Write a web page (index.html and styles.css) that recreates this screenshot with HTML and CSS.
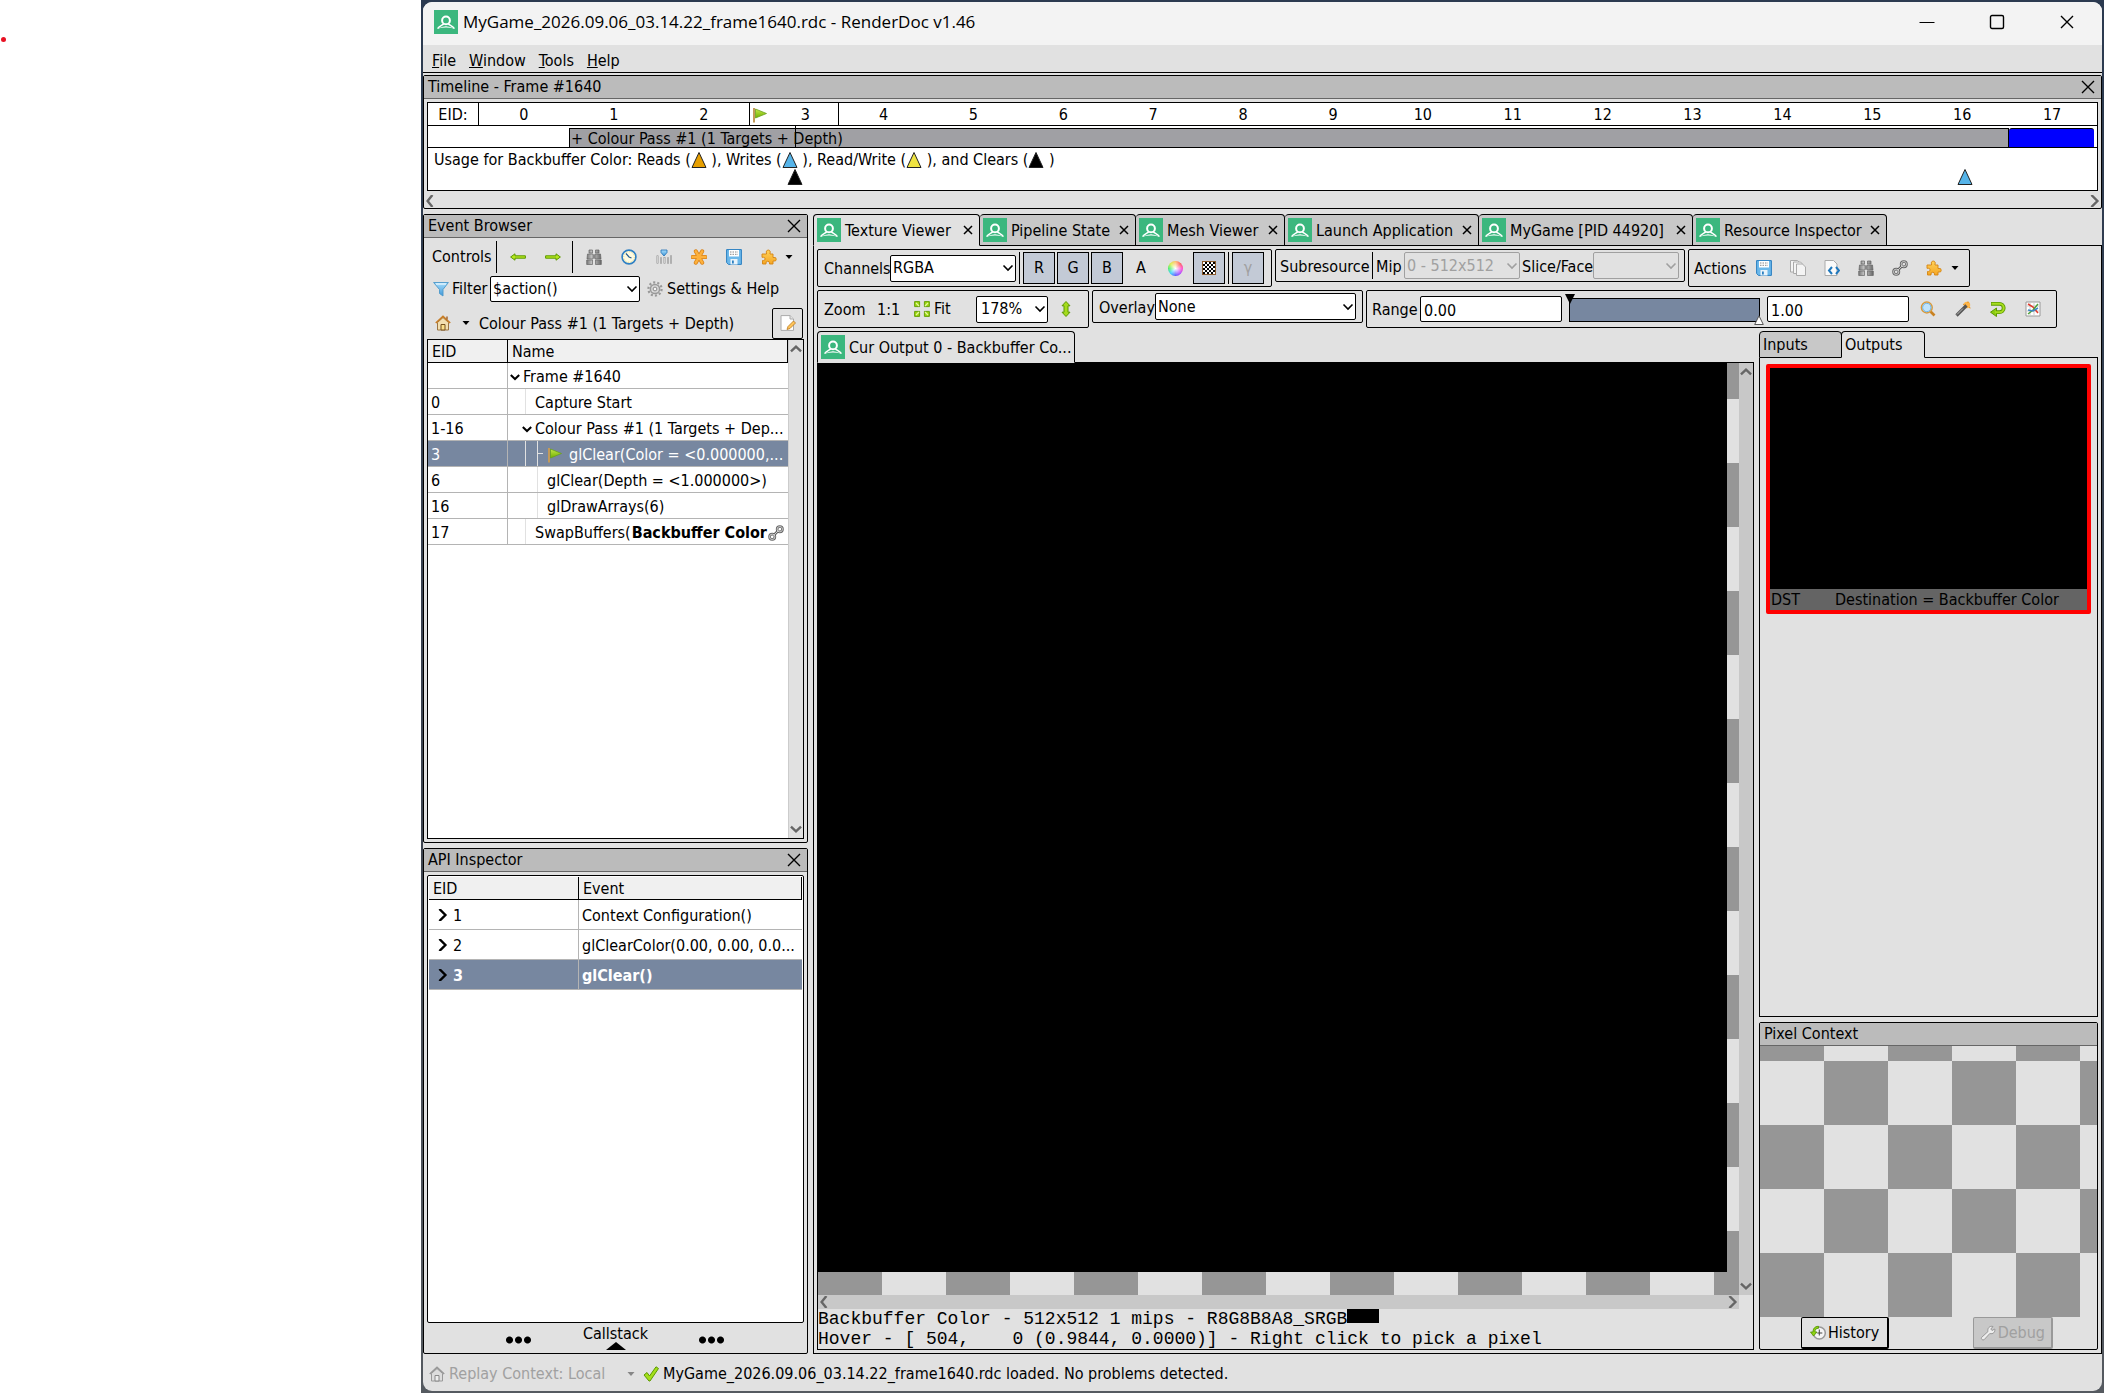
FILE: index.html
```html
<!DOCTYPE html>
<html lang="en">
<head>
<meta charset="utf-8">
<title>MyGame_2026.09.06_03.14.22_frame1640.rdc - RenderDoc v1.46</title>
<link rel="stylesheet" href="styles.css">
</head>
<body>
<svg class="sprite" aria-hidden="true">
  <defs>
    <linearGradient id="g-green" x1="0" y1="0" x2="0" y2="1"><stop offset="0" stop-color="#c5e84a"/><stop offset="1" stop-color="#6fb000"/></linearGradient>
    <linearGradient id="g-blue" x1="0" y1="0" x2="0" y2="1"><stop offset="0" stop-color="#a8defc"/><stop offset="1" stop-color="#3f97d8"/></linearGradient>
    <linearGradient id="g-orange" x1="0" y1="0" x2="0" y2="1"><stop offset="0" stop-color="#ffd35c"/><stop offset="1" stop-color="#f5a623"/></linearGradient>
    <linearGradient id="g-gray" x1="0" y1="0" x2="1" y2="0"><stop offset="0" stop-color="#777"/><stop offset=".4" stop-color="#ccc"/><stop offset="1" stop-color="#666"/></linearGradient>
  </defs>
  <symbol id="logo" viewBox="0 0 24 24"><rect width="24" height="24" fill="#3bb77e"/><circle cx="12" cy="10.4" r="3.9" fill="none" stroke="#fff" stroke-width="2"/><path d="M3.6 18.6C5.500 15.600 8.500 15.500 10 13.600M20.400 18.600C18.500 15.600 15.500 15.500 14 13.600" fill="none" stroke="#fff" stroke-width="1.600"/><path d="M3.600 18.700Q12 13.600 20.400 18.700Q12 16.200 3.600 18.700Z" fill="#fff"/></symbol>
  <symbol id="flag" viewBox="0 0 16 16"><path d="M2 1v14.500" stroke="#c39a5a" stroke-width="2"/><path d="M3.500 2L14.500 6.500L3.500 11Z" fill="url(#g-green)" stroke="#6a9f1c" stroke-width=".8"/></symbol>
  <symbol id="left" viewBox="0 0 16 16"><path d="M.6 8L5 4.800V6.800H15.400V9.200H5V11.200Z" fill="#b5e61d" stroke="#5c9900" stroke-width="1"/></symbol>
  <symbol id="right" viewBox="0 0 16 16"><path d="M15.400 8L11 4.800V6.800H.6V9.200H11V11.200Z" fill="#b5e61d" stroke="#5c9900" stroke-width="1"/></symbol>
  <symbol id="find" viewBox="0 0 16 16"><path d="M3 1h3.500v3H3zM9.500 1H13v3H9.500zM1.500 5H7v5H1zM9 5h5.500l.5 5H9zM.7 11H6.500v4.500H.7zM9.500 11h5.800v4.500H9.500z" fill="url(#g-gray)" stroke="#666" stroke-width=".7"/><path d="M7 5.500h2v4H7z" fill="#888"/></symbol>
  <symbol id="clock" viewBox="0 0 16 16"><circle cx="8" cy="8" r="6.900" fill="#fffbe0" stroke="#2f80c4" stroke-width="1.600"/><circle cx="8" cy="8" r="5.300" fill="none" stroke="#e3d37c" stroke-dasharray="1 1.700"/><path d="M5 4.500L8 8L10.500 9" stroke="#235b91" stroke-width="1.200" fill="none"/></symbol>
  <symbol id="bars" viewBox="0 0 16 16"><path d="M1.500 6.500v8M5 8.500v6M8.500 8v6.500M12 8.500v6M15 6.500v8" stroke="#888" stroke-width="1.800"/><path d="M1.500 7v7M5 9v5M8.500 8.500v5.500M12 9v5M15 7v7" stroke="#eee" stroke-width=".7"/><path d="M5 1h6v2.500L8 7L5 3.500Z" fill="url(#g-blue)" stroke="#1f6fb5" stroke-width=".8"/></symbol>
  <symbol id="star" viewBox="0 0 16 16"><path d="M8 8L4.800 2.300M8 8L11.200 2.300M8 8H1.500M8 8H14.500M8 8L4.800 13.700M8 8L11.200 13.700" stroke="#d9831b" stroke-width="4" stroke-linecap="round"/><path d="M8 8L4.800 2.300M8 8L11.200 2.300M8 8H1.500M8 8H14.500M8 8L4.800 13.700M8 8L11.200 13.700" stroke="#fdb13c" stroke-width="2.400" stroke-linecap="round"/></symbol>
  <symbol id="save" viewBox="0 0 16 16"><path d="M.6.600h14.800v14.800H2.500L.6 13.500Z" fill="#6bb8ea" stroke="#2b7fc0"/><path d="M3 1h10v6.500H3z" fill="#fff"/><path d="M4 3h8M4 5.300h8" stroke="#888" stroke-dasharray="1.500 1"/><path d="M4.500 10h7v5.500h-7z" fill="#e9f3fa"/><path d="M6 11.500h1.800v3H6z" fill="#2b7fc0"/></symbol>
  <symbol id="puzzle" viewBox="0 0 16 16"><path d="M1 5H5.500V4A2 2 0 1 1 9 4V5H12V8.500H13A1.800 1.800 0 1 1 13 12H12V15H8.500V14A1.700 1.700 0 0 0 5 14V15H1.500V11.500H2.500A1.500 1.500 0 0 0 2.500 8.300H1Z" fill="url(#g-orange)" stroke="#d58512" stroke-width=".9"/></symbol>
  <symbol id="funnel" viewBox="0 0 16 16"><path d="M.6 1.500h14.800L10 8.500V15L6.500 12.500v-4Z" fill="url(#g-blue)" stroke="#4b97c9" stroke-width=".9"/><path d="M3 3h10" stroke="#fff"/></symbol>
  <symbol id="gear" viewBox="0 0 16 16"><circle cx="8" cy="8" r="6.600" fill="none" stroke="#999" stroke-width="2.200" stroke-dasharray="2.100 2.050"/><circle cx="8" cy="8" r="4.600" fill="#d8d8d8" stroke="#999" stroke-width="1.500"/><circle cx="8" cy="8" r="1.900" fill="#f5f5f5" stroke="#888"/></symbol>
  <symbol id="home" viewBox="0 0 16 16"><path d="M2.500 7.500V15h11V7.500L8 2.500Z" fill="#f3dfb0" stroke="#9c7540"/><path d="M.8 8L8 1.300L15.200 8" fill="none" stroke="#c77c25" stroke-width="1.700"/><path d="M6 15V9.500h4V15Z" fill="#fbe08b" stroke="#76501e"/><path d="M12 1.500v3" stroke="#a36632" stroke-width="1.500"/></symbol>
  <symbol id="home-off" viewBox="0 0 16 16"><path d="M2.500 7.500V15h11V7.500L8 2.500Z" fill="#ddd" stroke="#999"/><path d="M.8 8L8 1.300L15.200 8" fill="none" stroke="#999" stroke-width="1.700"/><path d="M6 15V9.500h4V15Z" fill="#eee" stroke="#888"/></symbol>
  <symbol id="edit" viewBox="0 0 16 16"><path d="M1 .6h9L13.500 4v11.400H1Z" fill="#fff" stroke="#aaa"/><path d="M10 .6V4h3.500" fill="#e5e5e5" stroke="#aaa"/><path d="M7 14.500L8 11.500L13.500 6L15.500 8L10 13.500Z" fill="#ffc55a" stroke="#b8761d" stroke-width=".8"/></symbol>
  <symbol id="link" viewBox="0 0 16 16"><g fill="none" stroke="#666" stroke-width="2.600"><circle cx="4.200" cy="11.800" r="2.700"/><circle cx="11.800" cy="4.200" r="2.700"/><path d="M5.500 10.500l5-5"/></g><g fill="none" stroke="#ccc" stroke-width="1"><circle cx="4.200" cy="11.800" r="2.700"/><circle cx="11.800" cy="4.200" r="2.700"/><path d="M5.500 10.500l5-5"/></g></symbol>
  <symbol id="copy" viewBox="0 0 16 16"><g fill="#f4f4f4" stroke="#aaa"><path d="M.5.500h7L9 2v10H.5z"/><path d="M3.500 2h7L12 3.500v10H3.500z"/><path d="M6.500 4h6l3 3v8.500h-9z"/></g></symbol>
  <symbol id="code" viewBox="0 0 16 16"><path d="M1 .5h8.500L13 4v11.500H1Z" fill="#fafafa" stroke="#aaa"/><path d="M8 7L5 10.500L8 14M12 7l3 3.500L12 14" fill="none" stroke="#1f78bd" stroke-width="2"/></symbol>
  <symbol id="fit" viewBox="0 0 16 16"><g fill="#9bd60b" stroke="#5c9900" stroke-width=".9"><path d="M.6.600h5v5h-5zM10.400.600h5v5h-5zM.6 10.400h5v5h-5zM10.400 10.400h5v5h-5z"/></g><path d="M5 5L2 2M11 5l3-3M5 11l-3 3M11 11l3 3" stroke="#e4f8a0" stroke-width="1.300"/></symbol>
  <symbol id="updown" viewBox="0 0 16 16"><path d="M8 .5L12 4.800H10V11.200H12L8 15.500L4 11.200H6V4.800H4Z" fill="#a5db1d" stroke="#5c9900"/></symbol>
  <symbol id="lens" viewBox="0 0 16 16"><path d="M10.500 10.500L14.500 14.500" stroke="#c98222" stroke-width="2.600"/><circle cx="6.800" cy="6.500" r="5.400" fill="#cfeaff" stroke="#d99a3c" stroke-width="1.500"/><circle cx="6.800" cy="6.500" r="4.200" fill="#bfe3fc" stroke="#6eb2e2"/></symbol>
  <symbol id="wand" viewBox="0 0 16 16"><circle cx="12" cy="4" r="3.200" fill="#ffb547"/><path d="M8 3l1.500 1M13 .5V2M15.500 7L14 6.500" stroke="#e58e1a"/><path d="M1.500 14.500L11.500 4.500" stroke="#555" stroke-width="3.200"/><path d="M2 13.500L8 7.500" stroke="#bbb" stroke-width="1"/></symbol>
  <symbol id="undo" viewBox="0 0 16 16"><path d="M1 2.800h8.500a4.200 4.200 0 0 1 0 8.400H6" fill="none" stroke="#5c9900" stroke-width="3.800"/><path d="M6.500 7V15.500L.5 11.200Z" fill="#8ccc10" stroke="#5c9900"/><path d="M1.500 2.800h8a4.200 4.200 0 0 1 0 8.400H5" fill="none" stroke="#a7dd1e" stroke-width="2"/></symbol>
  <symbol id="chart" viewBox="0 0 16 16"><path d="M1 1h14v14H1z" fill="#fff" stroke="#999"/><path d="M5 1v14M9 1v14M1 5h14M1 10h14" stroke="#ccc"/><path d="M3 3L8 6L13 12" stroke="#e03c2f" stroke-width="1.600" fill="none"/><path d="M3 13L8 9L13 3" stroke="#51a13a" stroke-width="1.500" fill="none"/><path d="M3 9l5 1l5-3" stroke="#3c86c4" stroke-width="1.500" fill="none"/></symbol>
  <symbol id="history" viewBox="0 0 16 16"><circle cx="9.300" cy="8" r="6" fill="#f5f5f5" stroke="#999" stroke-width="1.500"/><path d="M9.300 4.500V8h3M9.300 8v2.500M9.300 8h-2" stroke="#444" fill="none"/><path d="M8.500 1.300C4.500 1.300 3 4 3 7H.5L3.500 11L7 7H5C5 4.500 6 3.300 8.500 3.300Z" fill="#8fd413" stroke="#4f8d00" stroke-width=".8"/></symbol>
  <symbol id="wrench" viewBox="0 0 16 16"><path d="M1.500 12.500L8 6.500C7 3 10 .5 13 1.500L10.800 4l1.200 1.500L14.800 4C15.500 7 13 9.500 9.800 8.500L4 14.800C2.500 15.500.8 14 1.500 12.500Z" fill="#eee" stroke="#999"/></symbol>
  <symbol id="tick" viewBox="0 0 16 16"><path d="M1 9L4 6.500L6.500 10L13 .8L15.500 2.500L7 15H6Z" fill="#a4df1b" stroke="#5c9900"/></symbol>
  <symbol id="down" viewBox="0 0 16 16"><path d="M4.500 6h7L8 10Z" fill="#000"/></symbol>
  <symbol id="x" viewBox="0 0 16 16"><path d="M2 2L14 14M14 2L2 14" stroke="#000" stroke-width="1.400"/></symbol>
  <symbol id="tab-x" viewBox="0 0 10 10"><path d="M1 1L9 9M9 1L1 9" stroke="#000" stroke-width="1.500"/></symbol>
  <symbol id="chev-d" viewBox="0 0 10 10"><path d="M.8 3L5 7L9.200 3" fill="none" stroke="currentColor" stroke-width="2"/></symbol>
  <symbol id="chev-r" viewBox="0 0 10 10"><path d="M2 0L7 5L2 10" fill="none" stroke="currentColor" stroke-width="2"/></symbol>
  <symbol id="chev-l" viewBox="0 0 10 10"><path d="M7 0L3 5L7 10" fill="none" stroke="currentColor" stroke-width="2"/></symbol>
  <symbol id="chev-u" viewBox="0 0 10 10"><path d="M.8 7L5 3L9.200 7" fill="none" stroke="currentColor" stroke-width="2"/></symbol>
  <symbol id="tri" viewBox="0 0 16 16"><path d="M8 .5L15 15.500H1Z" fill="currentColor" stroke="#222" stroke-width="1"/></symbol>
</svg>

<div class="desktop">
<span class="dot"></span>
<div class="window">
  <header class="titlebar">
    <svg class="logo"><use href="#logo"/></svg>
    <h1>MyGame_2026.09.06_03.14.22_frame1640.rdc - RenderDoc v1.46</h1>
    <button class="sys" aria-label="Minimize"><svg class="i16" viewBox="0 0 16 16"><path d="M.5 8.500h15" stroke="#000"/></svg></button>
    <button class="sys" aria-label="Maximize"><svg class="i16" viewBox="0 0 16 16"><rect x="1.500" y="1.500" width="13" height="13" rx="1.500" fill="none" stroke="#000" stroke-width="1.400"/></svg></button>
    <button class="sys" aria-label="Close"><svg class="i16"><use href="#x"/></svg></button>
  </header>
  <nav class="menu">
    <a href="#"><u>F</u>ile</a><a href="#"><u>W</u>indow</a><a href="#"><u>T</u>ools</a><a href="#"><u>H</u>elp</a>
  </nav>

  <section class="dock timeline">
    <div class="dock-head"><h2>Timeline - Frame #1640</h2><button class="plain" aria-label="Close"><svg class="i16"><use href="#x"/></svg></button></div>
    <div class="tl-frame">
      <div class="tl-ids">
        <span class="tl-label">EID:</span>
        <span>0</span><span>1</span><span>2</span><span class="now"><svg class="i16"><use href="#flag"/></svg>3</span><span>4</span><span>5</span><span>6</span><span>7</span><span>8</span><span>9</span><span>10</span><span>11</span><span>12</span><span>13</span><span>14</span><span>15</span><span>16</span><span>17</span>
      </div>
      <div class="tl-bars">
        <div class="pass">+ Colour Pass #1 (1 Targets + Depth)</div>
        <div class="swap"></div>
        <i class="cursor"></i>
      </div>
      <div class="tl-usage">
        <div class="legend">Usage for Backbuffer Color: Reads (<svg class="i16 c-read"><use href="#tri"/></svg> ), Writes (<svg class="i16 c-write"><use href="#tri"/></svg> ), Read/Write (<svg class="i16 c-rw"><use href="#tri"/></svg> ), and Clears (<svg class="i16"><use href="#tri"/></svg> )</div>
        <div class="marks"><svg class="i16"><use href="#tri"/></svg><svg class="i16 c-write"><use href="#tri"/></svg></div>
      </div>
    </div>
    <div class="hscroll"><svg><use href="#chev-l"/></svg><svg><use href="#chev-r"/></svg></div>
  </section>

  <main class="work">
    <div class="side">
      <section class="dock">
        <div class="dock-head"><h2>Event Browser</h2><button class="plain" aria-label="Close"><svg class="i16"><use href="#x"/></svg></button></div>
        <div class="eb-controls">
          <span class="eb-title">Controls</span><i class="sep"></i>
          <div class="icons nav"><button aria-label="Back"><svg class="i16"><use href="#left"/></svg></button><button aria-label="Forward"><svg class="i16"><use href="#right"/></svg></button></div><i class="sep"></i>
          <div class="icons tools"><button aria-label="Find"><svg class="i16"><use href="#find"/></svg></button><button aria-label="Durations"><svg class="i16"><use href="#clock"/></svg></button><button aria-label="Columns"><svg class="i16"><use href="#bars"/></svg></button><button aria-label="Bookmark"><svg class="i16"><use href="#star"/></svg></button><button aria-label="Save"><svg class="i16"><use href="#save"/></svg></button><button aria-label="Extensions"><svg class="i16"><use href="#puzzle"/></svg></button></div>
          <svg class="i16 arrow"><use href="#down"/></svg>
        </div>
        <div class="eb-filter">
          <svg class="i16"><use href="#funnel"/></svg><label for="filter">Filter</label>
          <select id="filter"><option>$action()</option></select>
          <button class="plain"><svg class="i16"><use href="#gear"/></svg>Settings &amp; Help</button>
        </div>
        <div class="eb-crumbs">
          <button class="plain" aria-label="Root"><svg class="i16"><use href="#home"/></svg><svg class="i16"><use href="#down"/></svg></button>
          <span>Colour Pass #1 (1 Targets + Depth)</span>
          <button class="boxed" aria-label="Edit"><svg class="i16"><use href="#edit"/></svg></button>
        </div>
        <div class="list">
          <table class="events">
            <thead><tr><th class="c-eid">EID</th><th>Name</th></tr></thead>
            <tbody>
              <tr><td></td><td><div class="node d0"><svg class="chev"><use href="#chev-d"/></svg>Frame #1640</div></td></tr>
              <tr><td>0</td><td><div class="node d1">Capture Start</div></td></tr>
              <tr><td>1-16</td><td><div class="node d1 open"><svg class="chev"><use href="#chev-d"/></svg>Colour Pass #1 (1 Targets + Dep...</div></td></tr>
              <tr class="sel"><td>3</td><td><div class="node d2"><svg class="i16"><use href="#flag"/></svg>glClear(Color = &lt;0.000000,...</div></td></tr>
              <tr><td>6</td><td><div class="node d2">glClear(Depth = &lt;1.000000&gt;)</div></td></tr>
              <tr><td>16</td><td><div class="node d2">glDrawArrays(6)</div></td></tr>
              <tr><td>17</td><td><div class="node d1">SwapBuffers(<b>Backbuffer Color</b><svg class="i16"><use href="#link"/></svg></div></td></tr>
            </tbody>
          </table>
          <div class="vscroll"><svg><use href="#chev-u"/></svg><svg><use href="#chev-d"/></svg></div>
        </div>
      </section>

      <section class="dock">
        <div class="dock-head"><h2>API Inspector</h2><button class="plain" aria-label="Close"><svg class="i16"><use href="#x"/></svg></button></div>
        <div class="list api">
          <table class="calls">
            <thead><tr><th class="c-call">EID</th><th>Event</th></tr></thead>
            <tbody>
              <tr><td><svg class="chev"><use href="#chev-r"/></svg>1</td><td>Context Configuration()</td></tr>
              <tr><td><svg class="chev"><use href="#chev-r"/></svg>2</td><td>glClearColor(0.00, 0.00, 0.0...</td></tr>
              <tr class="sel"><td><svg class="chev"><use href="#chev-r"/></svg>3</td><td>glClear()</td></tr>
            </tbody>
          </table>
        </div>
        <div class="callstack"><i></i><span>Callstack<svg viewBox="0 0 20 8"><path d="M10 0L20 8H0Z"/></svg></span><i></i></div>
      </section>
    </div>

    <div class="center">
      <nav class="tabs">
        <div class="tab on"><svg class="logo"><use href="#logo"/></svg><span>Texture Viewer</span><button class="plain" aria-label="Close"><svg class="i10"><use href="#tab-x"/></svg></button></div>
        <div class="tab t2"><svg class="logo"><use href="#logo"/></svg><span>Pipeline State</span><button class="plain" aria-label="Close"><svg class="i10"><use href="#tab-x"/></svg></button></div>
        <div class="tab t3"><svg class="logo"><use href="#logo"/></svg><span>Mesh Viewer</span><button class="plain" aria-label="Close"><svg class="i10"><use href="#tab-x"/></svg></button></div>
        <div class="tab t4"><svg class="logo"><use href="#logo"/></svg><span>Launch Application</span><button class="plain" aria-label="Close"><svg class="i10"><use href="#tab-x"/></svg></button></div>
        <div class="tab t5"><svg class="logo"><use href="#logo"/></svg><span>MyGame [PID 44920]</span><button class="plain" aria-label="Close"><svg class="i10"><use href="#tab-x"/></svg></button></div>
        <div class="tab t6"><svg class="logo"><use href="#logo"/></svg><span>Resource Inspector</span><button class="plain" aria-label="Close"><svg class="i10"><use href="#tab-x"/></svg></button></div>
        <div class="tab-rest"></div>
      </nav>
      <div class="viewer">
        <div class="bars">
          <div class="bar channels">
            <label for="chan">Channels</label><select id="chan"><option>RGBA</option></select><i class="sep"></i>
            <div class="toggles"><button class="on">R</button><button class="on">G</button><button class="on">B</button><button>A</button><button aria-label="Background color"><i class="wheel"></i></button><button class="on" aria-label="Checkerboard"><i class="check"></i></button></div>
            <i class="sep"></i><button class="gamma" disabled>γ</button>
          </div>
          <div class="bar low subres">
            <span class="l-sub">Subresource</span><i class="sep"></i><label class="l-mip" for="mip">Mip</label><select id="mip" disabled><option>0 - 512x512</option></select>
            <label class="l-slice" for="slice">Slice/Face</label><select id="slice" disabled><option></option></select>
          </div>
          <div class="bar actions">
            <span class="l-act">Actions</span>
            <div class="icons"><button aria-label="Save"><svg class="i16"><use href="#save"/></svg></button><button aria-label="Copy"><svg class="i16"><use href="#copy"/></svg></button><button aria-label="Shader"><svg class="i16"><use href="#code"/></svg></button><button aria-label="Find"><svg class="i16"><use href="#find"/></svg></button><button aria-label="Link"><svg class="i16"><use href="#link"/></svg></button><button aria-label="Extensions"><svg class="i16"><use href="#puzzle"/></svg></button></div>
            <svg class="i16 arrow"><use href="#down"/></svg>
          </div>
        </div>
        <div class="bars">
          <div class="bar zoom">
            <label class="l-zoom" for="zoom">Zoom</label><button class="plain l-one">1:1</button><button class="plain l-fit"><svg class="i16"><use href="#fit"/></svg>Fit</button><select id="zoom"><option>178%</option></select><button class="plain flip" aria-label="Flip"><svg class="i16"><use href="#updown"/></svg></button>
          </div>
          <div class="bar low overlay"><label class="l-over" for="over">Overlay</label><select id="over"><option>None</option></select></div>
          <div class="bar range">
            <label class="l-range" for="rmin">Range</label><input id="rmin" type="text" value="0.00">
            <div class="slider"><input type="range" aria-label="Visible range" min="0" max="1" value="1"><svg class="lo" viewBox="0 0 10 10"><path d="M0 0H10L5 10Z"/></svg><svg class="hi" viewBox="0 0 10 10"><path d="M5 .8L9.300 9.500H.7Z" fill="#fff" stroke="#555"/></svg></div>
            <input type="text" aria-label="Range maximum" value="1.00">
            <div class="icons"><button aria-label="Zoom range"><svg class="i16"><use href="#lens"/></svg></button><button aria-label="Auto fit"><svg class="i16"><use href="#wand"/></svg></button><button aria-label="Reset"><svg class="i16"><use href="#undo"/></svg></button><button aria-label="Histogram"><svg class="i16"><use href="#chart"/></svg></button></div>
          </div>
        </div>
        <div class="panes">
          <div class="pane">
            <div class="tabs"><div class="tab on out"><svg class="logo"><use href="#logo"/></svg><span>Cur Output 0 - Backbuffer Co...</span></div></div>
            <div class="canvas-frame">
              <div class="canvas"><div class="texture"></div></div>
              <div class="vscroll"><svg><use href="#chev-u"/></svg><svg><use href="#chev-d"/></svg></div>
              <div class="hscroll"><svg><use href="#chev-l"/></svg><svg><use href="#chev-r"/></svg></div>
              <div class="info"><p>Backbuffer Color - 512x512 1 mips - R8G8B8A8_SRGB<i></i></p><p>Hover - [ 504,    0 (0.9844, 0.0000)] - Right click to pick a pixel</p></div>
            </div>
          </div>
          <div class="io">
            <section class="outputs">
              <div class="tabs"><div class="tab small">Inputs</div><div class="tab small on">Outputs</div><div class="tab-rest"></div></div>
              <div class="thumbs"><figure><figcaption><span>DST</span><span>Destination = Backbuffer Color</span></figcaption></figure></div>
            </section>
            <section class="dock context">
              <div class="dock-head"><h2>Pixel Context</h2></div>
              <div class="pixels"></div>
              <div class="buttons"><button class="push"><svg class="i16"><use href="#history"/></svg>History</button><button class="push" disabled><svg class="i16"><use href="#wrench"/></svg>Debug</button></div>
            </section>
          </div>
        </div>
      </div>
    </div>
  </main>

  <footer class="status">
    <svg class="i16"><use href="#home-off"/></svg><span class="ctx">Replay Context: Local</span><svg class="i16 faded"><use href="#down"/></svg><svg class="i16"><use href="#tick"/></svg><span>MyGame_2026.09.06_03.14.22_frame1640.rdc loaded. No problems detected.</span>
  </footer>
</div>
</div>
</body>
</html>
```
FILE: styles.css
```css
*, *::before, *::after { box-sizing: border-box; }

body {
  margin: 0;
  background: #fff;
  color: #000;
  font: 16px/20px "DejaVu Sans Condensed", "Noto Sans", sans-serif;
}
h1, h2, p, figure { margin: 0; font-size: inherit; font-weight: normal; }
button, select, input { font: inherit; color: inherit; margin: 0; }
button { padding: 0; border: 0; background: none; }
a { color: inherit; text-decoration: none; }
svg { flex: none; display: block; }

.sprite { position: absolute; width: 0; height: 0; }
.i16 { width: 16px; height: 16px; }
.i10 { width: 10px; height: 10px; }
.chev { width: 10px; height: 10px; }
.logo { width: 24px; height: 24px; }
.plain { display: flex; align-items: center; }

/* desktop and window */
.desktop {
  position: relative;
  height: 100vh;
  padding: 2px 2px 2px 423px;
  background: linear-gradient(to right, #fff 421px, transparent 421px), linear-gradient(#2b3a50, #3d4450 60%, #555a60);
}
.dot { position: absolute; left: 1px; top: 37px; width: 5px; height: 5px; border-radius: 50%; background: #e81123; }
.window { height: 100%; display: flex; flex-direction: column; overflow: hidden; background: #e1e1e1; border-radius: 9px; }
.titlebar { height: 43px; flex: none; display: flex; align-items: center; background: #f3f3f3; padding: 0 0 3px 11px; }
.titlebar h1 { flex: 1; margin-left: 5px; font: 17px/24px "Open Sans", sans-serif; }
.sys { width: 70px; height: 40px; display: grid; place-items: center; }
.menu { height: 28px; flex: none; display: flex; gap: 13px; align-items: center; padding: 4px 0 0 9px; border-bottom: 1px solid #000; }

/* docks */
.dock { display: flex; flex-direction: column; min-height: 0; border: 1px solid #000; border-radius: 2px; }
.dock-head {
  height: 23px; flex: none; display: flex; align-items: center; justify-content: space-between;
  padding: 0 5px 0 4px; background: #bbb; border-bottom: 1px solid #666;
}

/* timeline */
.timeline { margin-top: 2px; height: 134px; flex: none; }
.tl-frame { margin: 3px 3px 0; height: 89px; background: #fff; border: 1px solid #000; }
.tl-ids { display: flex; height: 23px; padding-top: 2px; border-bottom: 1px solid #000; }
.tl-ids span { flex: 1; display: flex; align-items: center; justify-content: center; }
.tl-ids .tl-label { flex: none; width: 51px; margin-top: -2px; padding-top: 2px; border-right: 1px solid #000; }
.tl-ids .now { justify-content: flex-start; margin-top: -2px; padding-top: 2px; box-shadow: inset 1px 0 #000, inset -1px 0 #000; }
.tl-ids .now svg { margin: 0 33px 0 3px; }
.tl-bars { position: relative; display: flex; height: 22px; padding: 2px 3px 0 141px; border-bottom: 1px solid #000; }
.pass { flex: 1440; border: 1px solid #000; border-bottom: 0; background: #a0a0a4; padding-left: 1px; line-height: 20px; overflow: hidden; }
.swap { flex: 85; background: #00f; border-radius: 3px 3px 0 0; border-top: 1px solid #000; }
.cursor { position: absolute; left: 367px; top: 0; bottom: 0; width: 1px; background: #000; }
.legend { display: flex; align-items: center; padding-left: 6px; height: 24px; white-space: pre; }
.marks { display: flex; justify-content: space-between; padding: 0 124px 0 359px; margin-top: -3px; }
.c-read { color: #e69f00; }
.c-write { color: #56b4e9; }
.c-rw { color: #f0e442; }
.hscroll { display: flex; justify-content: space-between; align-items: center; color: #666; }
.hscroll svg, .vscroll svg { width: 12px; height: 12px; }
.timeline .hscroll { flex: 1; padding: 3px 0 0; }
.vscroll { display: flex; flex-direction: column; justify-content: space-between; align-items: center; color: #666; padding: 3px 0; }

/* work area */
.work { flex: 1; min-height: 0; display: grid; grid-template-columns: 385px 1fr; gap: 5px; padding-top: 5px; }
.side { display: grid; grid-template-rows: minmax(0, 629fr) minmax(0, 506fr); gap: 5px; min-height: 0; }

.sep { width: 1px; height: 32px; background: #000; flex: none; }
.icons { display: flex; }
.icons button { width: 35px; height: 32px; display: grid; place-items: center; }
.eb-controls { display: flex; align-items: center; height: 32px; margin-top: 3px; padding-left: 8px; }
.eb-title { width: 64px; flex: none; }
.nav { padding: 0 2px 0 3px; }
.tools { padding-left: 3px; }
.eb-controls .arrow { margin-left: -5px; }
.eb-filter { display: flex; align-items: center; height: 26px; margin-top: 3px; padding-left: 9px; }
.eb-filter label { width: 41px; padding-left: 3px; flex: none; }
.eb-filter select { width: 150px; height: 26px; margin-right: 7px; }
.eb-filter .plain { gap: 4px; white-space: nowrap; }
.eb-crumbs { display: flex; align-items: center; height: 32px; margin-top: 5px; padding: 0 4px 0 11px; white-space: nowrap; }
.eb-crumbs .plain { gap: 7px; width: 44px; flex: none; }
.eb-crumbs span { flex: 1; padding-top: 2px; }
.boxed { width: 31px; height: 31px; display: grid; place-items: center; border: 1px solid #000; border-radius: 2px; }

select {
  appearance: none; border: 1px solid #000; border-radius: 2px; padding: 0 2px;
  background: #fff url("data:image/svg+xml,%3Csvg xmlns='http://www.w3.org/2000/svg' width='12' height='12'%3E%3Cpath d='M1.500 3.500L6 8L10.500 3.500' fill='none' stroke='%23000' stroke-width='1.600'/%3E%3C/svg%3E") no-repeat right 1px center;
}
select:disabled {
  opacity: 1; color: #a0a0a0; border-color: #a0a0a0;
  background: #e1e1e1 url("data:image/svg+xml,%3Csvg xmlns='http://www.w3.org/2000/svg' width='12' height='12'%3E%3Cpath d='M1.500 3.500L6 8L10.500 3.500' fill='none' stroke='%23a0a0a0' stroke-width='1.600'/%3E%3C/svg%3E") no-repeat right 1px center;
}
input[type=text] { height: 26px; width: 142px; border: 1px solid #000; border-radius: 2px; padding: 2px 3px 0; background: #fff; }

.list { flex: 1; min-height: 0; display: flex; align-items: flex-start; margin: 0 3px 3px; border: 1px solid #000; background: #fff; }
.list .vscroll { width: 15px; align-self: stretch; background: #e1e1e1; border-left: 1px solid #ccc; }
table { flex: 1; width: 100%; min-width: 0; border-collapse: separate; border-spacing: 0; table-layout: fixed; }
th { font-weight: normal; text-align: left; background: #f0f0f0; border: solid #000; border-width: 0 1px 1px 0; height: 23px; padding: 2px 4px 0; }
td { border: solid #b4b4b4; border-width: 0 1px 1px 0; padding: 2px 3px 0; white-space: nowrap; }
td + td { border-right: 0; }
.c-eid { width: 80px; }
.events td { height: 26px; }
.events td + td { padding: 0; }
.sel td { background: #7787a0; color: #fff; }
.node { display: flex; align-items: center; height: 25px; padding: 2px 0 0 2px; gap: 3px; position: relative; white-space: pre; }
.node.d1 { padding-left: 27px; gap: 1px; }
.node.d2 { padding-left: 39px; }
.node.open { padding-left: 14px; gap: 3px; }
.d1:not(.open)::before, .d2::before { content: ""; position: absolute; left: 17px; top: 0; bottom: 0; width: 6px; border-left: 1px solid #e1e1e1; }
.d2::before { left: 29px; }
.sel .node { gap: 6px; }
.sel .d2::before { left: 17px; width: 13px; border-right: 1px solid #e1e1e1; }
.sel .d2::after { content: ""; position: absolute; left: 30px; top: 12px; width: 5px; border-top: 1px solid #e1e1e1; }

.api { margin-top: 3px; padding: 1px; border-radius: 2px; }
.c-call { width: 150px; }
.calls td { height: 30px; }
.calls td .chev { display: inline-block; width: 12px; height: 12px; margin: 0 4px 0 5px; }
.calls .sel td { font-weight: bold; }
.calls .sel .chev { color: #000; }
.callstack { height: 27px; flex: none; display: flex; justify-content: center; gap: 50px; padding-bottom: 4px; align-items: center; }
.callstack i { width: 28px; height: 8px; margin-top: 4px; background: radial-gradient(circle, #000 3px, transparent 4px) 0 0 / 9px 8px; }
.callstack span { display: flex; flex-direction: column; align-items: center; line-height: 17px; }
.callstack svg { width: 20px; height: 8px; }

/* tabs */
.center { display: flex; flex-direction: column; min-width: 0; min-height: 0; }
.tabs { display: flex; flex: none; }
.tab {
  height: 32px; display: flex; align-items: center; gap: 4px; padding: 0 6px 0 3px; white-space: nowrap;
  background: #c8c8c8; border: 1px solid #000; border-left: 0; border-radius: 4px 4px 0 0;
}
.tab span { flex: 1; padding-top: 2px; }
.tab.on { background: #e1e1e1; border-bottom-color: #e1e1e1; border-left: 1px solid #000; width: 167px; }
.t2 { width: 156px; } .t3 { width: 149px; } .t4 { width: 194px; } .t5 { width: 214px; } .t6 { width: 194px; }
.tab-rest { flex: 1; border-bottom: 1px solid #000; }
.tab.out { width: 258px; padding-right: 0; }
.tab.small { width: 83px; height: 27px; padding: 1px 3px 0; border-left: 1px solid #000; }
.tab.small.on { margin-left: -1px; width: 84px; }

.viewer { flex: 1; min-height: 0; display: flex; flex-direction: column; gap: 3px; padding: 3px; border: solid #000; border-width: 0 1px 1px; }
.bars { display: flex; align-items: flex-start; gap: 3px; flex: none; }
.bar { height: 38px; display: flex; align-items: center; border: 1px solid #000; border-radius: 2px; padding: 0 6px; white-space: nowrap; }
.bar.low { height: 33px; }
.bar > span, .bar > label { flex: none; padding-top: 2px; }
.channels { width: 455px; }
.channels label { width: 66px; }
.channels select { width: 126px; height: 27px; margin-right: 3px; }
.toggles { display: flex; gap: 2px; margin: 0 3px; }
.toggles button, .gamma { width: 32px; height: 32px; display: grid; place-items: center; }
.toggles .on, .gamma { background: #c3cad6; border: 1px solid #000; }
.gamma { margin-left: 3px; color: #a0a0a0; }
.wheel { width: 15px; height: 15px; border-radius: 50%; background: radial-gradient(circle, #fff, transparent 70%), conic-gradient(#fb6, #f55, #f4c, #a4f, #55f, #3cf, #4e6, #de4, #fb6); }
.check { width: 14px; height: 14px; border: 1px solid #8a5a2b; background: repeating-conic-gradient(#000 0 25%, #fff 0 50%) 0 0 / 4px 4px; }
.subres { width: 410px; padding: 0 4px; }
.subres .sep { height: 27px; }
.l-sub { width: 92px; }
.l-mip { width: 31px; padding-left: 3px; }
#mip { width: 116px; height: 27px; }
.l-slice { width: 73px; padding-left: 2px; }
#slice { width: 86px; height: 27px; }
.actions { width: 282px; padding: 0 5px; }
.l-act { width: 53px; }
.actions .icons button { width: 34px; }
.actions .arrow { margin-left: -4px; }
.zoom { width: 272px; }
.l-zoom { width: 53px; }
.l-one { width: 37px; padding-top: 2px; }
.l-fit { width: 62px; gap: 4px; }
#zoom { width: 72px; height: 27px; padding-left: 4px; }
.flip { margin-left: 10px; }
.overlay { width: 271px; }
.l-over { width: 56px; }
#over { width: 201px; height: 27px; }
.range { width: 691px; padding-left: 5px; }
.l-range { width: 48px; }
.range .icons { margin-left: 1px; }
.slider { position: relative; width: 192px; height: 26px; margin: 0 7px; padding-top: 2px; }
.slider input { appearance: none; display: block; width: 100%; height: 24px; border: 1px solid #000; background: #7787a0; }
.slider input::-webkit-slider-thumb { appearance: none; width: 1px; height: 22px; }
.lo, .hi { position: absolute; width: 10px; height: 10px; }
.lo { left: -4px; top: -2px; }
.hi { right: -4px; bottom: -3px; }

/* panes */
.panes { flex: 1; min-height: 0; display: grid; grid-template-columns: 1fr 339px; gap: 5px; }
.pane, .io { display: flex; flex-direction: column; min-width: 0; min-height: 0; }
.canvas-frame { flex: 1; min-height: 0; display: grid; grid-template: minmax(0, 1fr) 14px 40px / minmax(0, 1fr) 14px; border: 1px solid #000; margin-top: -1px; }
.pane .tabs { z-index: 1; }
.canvas, .pixels { background: repeating-conic-gradient(#969696 0 25%, #e1e1e1 0 50%) 64px -28px / 128px 128px; }
.canvas { padding: 0 12px 23px 0; }
.texture { height: 100%; background: #000; }
.canvas-frame .vscroll, .canvas-frame .hscroll { background: #c8c8c8; }
.info { grid-column: 1 / -1; font: 18px/20px "Liberation Mono", monospace; white-space: pre; }
.info p { display: flex; }
.info i { width: 32px; height: 14px; background: #000; }
.io { gap: 5px; }
.outputs { flex: 1; min-height: 0; display: flex; flex-direction: column; }
.thumbs { flex: 1; border: 1px solid #000; border-top: 0; padding: 6px 6px 0; }
.thumbs figure { height: 250px; border: 4px solid #f00; border-radius: 2px; background: #000; display: flex; align-items: flex-end; }
figcaption { flex: 1; display: flex; height: 21px; line-height: 21px; background: #646464; padding-left: 1px; }
figcaption span:first-child { width: 64px; }
.context { flex: 0 0 328px; }
.pixels { flex: 1; background-position: 64px -49px; }
.buttons { height: 32px; flex: none; display: flex; justify-content: space-between; padding: 0 44px 0 41px; }
.push { height: 32px; display: flex; align-items: center; gap: 2px; padding: 0 8px; border: 1px solid #000; border-right-width: 2px; border-bottom-width: 2px; border-radius: 2px; background: #e1e1e1; }
.push:disabled { color: #a0a0a0; border-color: #999; background: #c8c8c8; padding: 0 6px; }

.status { height: 37px; flex: none; display: flex; align-items: center; gap: 4px; padding: 2px 0 0 6px; white-space: nowrap; }
.ctx { color: #a0a0a0; width: 170px; }
.faded { opacity: .4; }
```
